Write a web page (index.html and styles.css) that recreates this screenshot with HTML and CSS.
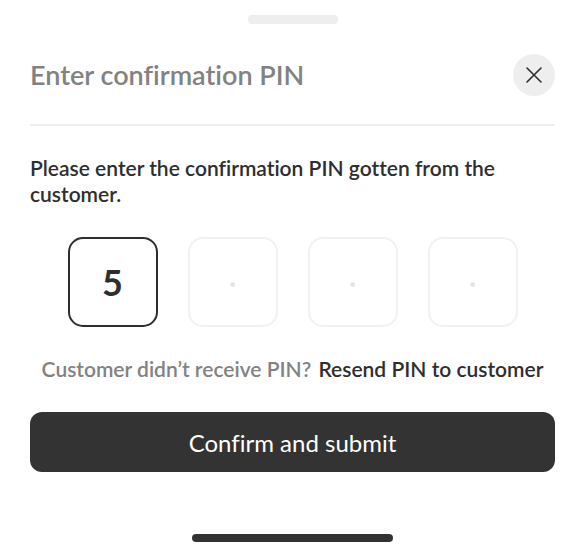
FILE: index.html
```html
<!DOCTYPE html>
<html lang="en">
<head>
    <meta charset="UTF-8">
    <meta name="viewport" content="width=device-width, initial-scale=1.0">
    <title>Enter confirmation PIN</title>
    <link rel="stylesheet" href="styles.css">
</head>
<body>
    <main class="sheet">
        <div class="handle"></div>

        <header class="sheet-header">
            <h1>Enter confirmation PIN</h1>
            <button class="close" type="button" aria-label="Close">
                <svg width="18" height="18" viewBox="0 0 18 18" fill="none" stroke="#2e2e2e" stroke-width="1.6" stroke-linecap="round">
                    <path d="M2 2l14 14M16 2L2 16"/>
                </svg>
            </button>
        </header>

        <form class="pin-form">
            <p class="intro" id="intro">Please enter the confirmation PIN gotten from the customer.</p>

            <div class="pins" role="group" aria-labelledby="intro">
                <input class="pin filled" type="text" inputmode="numeric" maxlength="1" value="5" aria-label="Digit 1">
                <input class="pin" type="text" inputmode="numeric" maxlength="1" placeholder="·" aria-label="Digit 2">
                <input class="pin" type="text" inputmode="numeric" maxlength="1" placeholder="·" aria-label="Digit 3">
                <input class="pin" type="text" inputmode="numeric" maxlength="1" placeholder="·" aria-label="Digit 4">
            </div>

            <p class="resend">Customer didn’t receive PIN? <a href="#resend">Resend PIN to customer</a></p>

            <button class="submit" type="submit">Confirm and submit</button>
        </form>

        <div class="home-bar"></div>
    </main>
</body>
</html>
```

FILE: styles.css
```css
* {
    box-sizing: border-box;
}
body {
    font-family: "Lato", "Open Sans", sans-serif;
    font-variant-ligatures: none;
    margin: 0;
    background-color: #fff;
    color: #2e2e2e;
}
h1,
p {
    margin: 0;
}
.sheet {
    display: flex;
    flex-direction: column;
    padding: 15px 30px 12px;
}
.handle {
    align-self: center;
    width: 90px;
    height: 9px;
    border-radius: 4px;
    background-color: #eee;
}
.sheet-header {
    display: flex;
    align-items: center;
    justify-content: space-between;
    padding: 30px 0 28px;
    border-bottom: 2px solid #eee;
}
.sheet-header h1 {
    font-size: 27px;
    font-weight: 600;
    line-height: 32px;
    color: #828282;
}
.close {
    display: flex;
    align-items: center;
    justify-content: center;
    width: 42px;
    height: 42px;
    padding: 0;
    border: 0;
    border-radius: 50%;
    background-color: #eee;
}
.pin-form {
    display: flex;
    flex-direction: column;
    padding-top: 29px;
}
.intro {
    font-size: 21px;
    font-weight: 600;
    line-height: 26px;
}
.pins {
    display: flex;
    justify-content: center;
    gap: 30px;
    margin-top: 30px;
}
.pin {
    width: 90px;
    height: 90px;
    padding: 0;
    border: 2px solid #f1f1f1;
    border-radius: 15px;
    background-color: #fff;
    color: #2e2e2e;
    font-family: inherit;
    font-size: 24px;
    font-weight: 700;
    text-align: center;
}
.pin.filled {
    border-color: #2e2e2e;
    font-size: 36px;
}
.pin::placeholder {
    color: #e4e4e4;
    opacity: 1;
}
.resend {
    margin-top: 29px;
    font-size: 21px;
    font-weight: 600;
    line-height: 26px;
    text-align: center;
    color: #828282;
}
.resend a {
    margin-left: 2px;
    color: #2e2e2e;
    text-decoration: none;
}
.submit {
    height: 60px;
    margin-top: 30px;
    border: 0;
    border-radius: 12px;
    background-color: #333;
    color: #fff;
    font-family: inherit;
    font-size: 24px;
    font-variant-ligatures: none;
}
.home-bar {
    align-self: center;
    width: 201px;
    height: 8px;
    margin-top: 62px;
    border-radius: 4px;
    background-color: #333;
}
```
